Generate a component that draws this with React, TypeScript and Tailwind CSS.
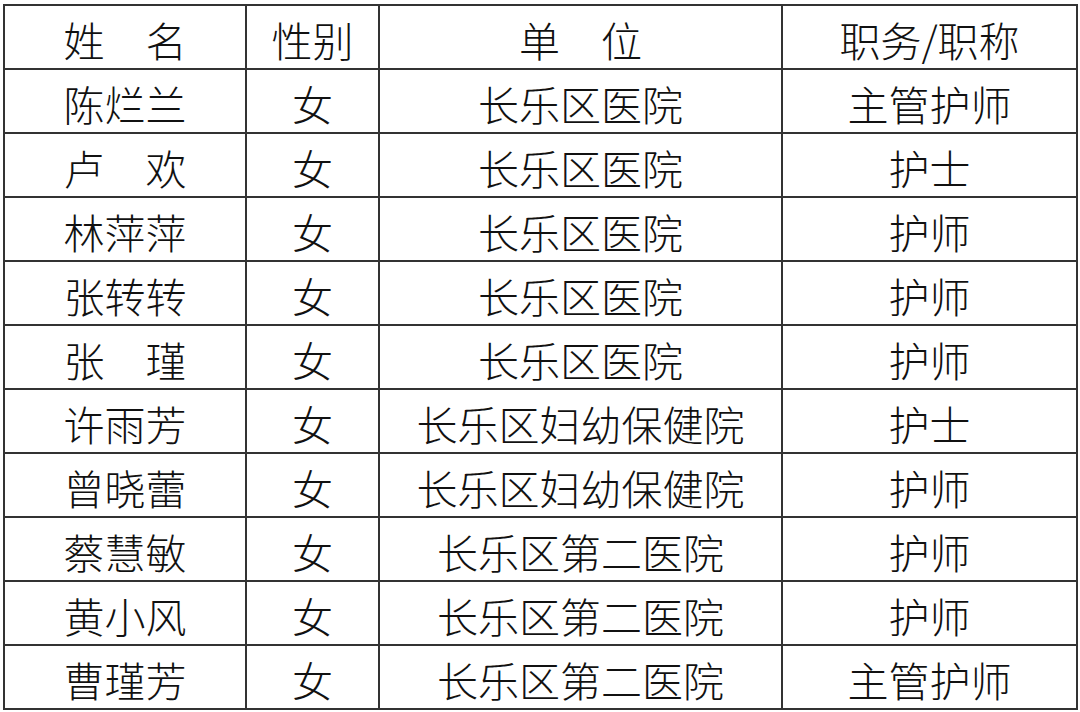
import { Fragment } from "react"

const rows: [string, string, string, string][] = [
  ["陈烂兰", "女", "长乐区医院", "主管护师"],
  ["卢欢", "女", "长乐区医院", "护士"],
  ["林萍萍", "女", "长乐区医院", "护师"],
  ["张转转", "女", "长乐区医院", "护师"],
  ["张瑾", "女", "长乐区医院", "护师"],
  ["许雨芳", "女", "长乐区妇幼保健院", "护士"],
  ["曾晓蕾", "女", "长乐区妇幼保健院", "护师"],
  ["蔡慧敏", "女", "长乐区第二医院", "护师"],
  ["黄小风", "女", "长乐区第二医院", "护师"],
  ["曹瑾芳", "女", "长乐区第二医院", "主管护师"],
]

function Cell({ text, spread = false }: { text: string; spread?: boolean }) {
  return (
    <div className="flex items-center justify-center bg-white pt-[5px]">
      {spread ? (
        // two characters spread over three character widths
        <span className="flex w-[3em] justify-between">
          <span>{text[0]}</span>
          <span>{text[1]}</span>
        </span>
      ) : (
        <span>{text}</span>
      )}
    </div>
  )
}

export default function App() {
  return (
    <div
      className="min-h-[712px] bg-white pl-[3px] pt-[4px] text-[41px] leading-none text-[#111]"
      style={{ fontFamily: '"Noto Sans CJK SC", sans-serif', fontWeight: 300 }}
    >
      <div className="grid w-fit grid-cols-[240px_131px_401px_293px] auto-rows-[62px] gap-[2px] bg-[#333] p-[2px]">
        <Cell text="姓名" spread />
        <Cell text="性别" />
        <Cell text="单位" spread />
        <Cell text="职务/职称" />
        {rows.map((r, i) => (
          <Fragment key={i}>
            <Cell text={r[0]} spread={r[0].length === 2} />
            <Cell text={r[1]} />
            <Cell text={r[2]} />
            <Cell text={r[3]} />
          </Fragment>
        ))}
      </div>
    </div>
  )
}
